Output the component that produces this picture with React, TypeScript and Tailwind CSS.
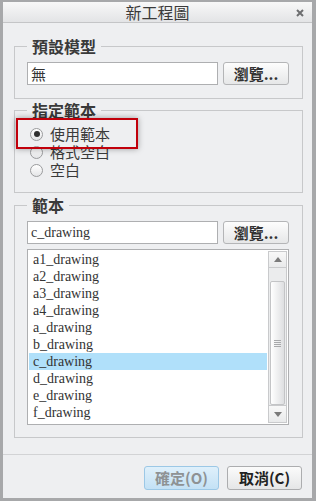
const templates = [
  'a1_drawing',
  'a2_drawing',
  'a3_drawing',
  'a4_drawing',
  'a_drawing',
  'b_drawing',
  'c_drawing',
  'd_drawing',
  'e_drawing',
  'f_drawing',
];

const cjk = "font-['Noto_Sans_CJK_TC','Noto_Sans_CJK_SC',sans-serif]";
const serif = "font-['Liberation_Serif',serif]";

function BrowseButton() {
  return (
    <button className="w-[66px] h-[23px] shrink-0 rounded-[3px] border border-[#b4b5b7] bg-linear-to-b from-[#fdfdfd] to-[#e6e7e8] text-[15px] leading-[20px] font-bold text-[#333]">
      瀏覽...
    </button>
  );
}

function Radio({ checked, label }: { checked?: boolean; label: string }) {
  return (
    <div className="h-[18px] flex items-center">
      <span className="w-[13px] h-[13px] rounded-full border border-[#9a9b9d] bg-linear-to-b from-[#ffffff] to-[#e4e5e7] flex items-center justify-center">
        {checked && <span className="w-[6px] h-[6px] rounded-full bg-[#2f2f2f]" />}
      </span>
      <span className="ml-[7px] text-[15px] leading-[18px] text-[#3a3a3a]">{label}</span>
    </div>
  );
}

function Scrollbar() {
  return (
    <div className="w-[19px] my-[1px] mr-[1px] border border-[#c9cacc] bg-[#ebeced] flex flex-col">
      <div className="h-[16px] border-b border-[#c9cacc] bg-linear-to-b from-[#f8f8f8] to-[#e9eaeb] flex items-center justify-center">
        <svg width="8" height="5" viewBox="0 0 8 5">
          <path d="M0 5 L4 0 L8 5 Z" fill="#7a7a7a" />
        </svg>
      </div>
      <div className="flex-1 flex flex-col">
        <div className="mt-[13px] mx-[1px] h-[124px] rounded-[2px] border border-[#c3c4c6] bg-linear-to-r from-[#ffffff] to-[#dedfe1] flex items-center justify-center">
          <div className="flex flex-col gap-[1px]">
            <span className="w-[7px] h-[1px] bg-[#a8a9ab]" />
            <span className="w-[7px] h-[1px] bg-[#a8a9ab]" />
            <span className="w-[7px] h-[1px] bg-[#a8a9ab]" />
            <span className="w-[7px] h-[1px] bg-[#a8a9ab]" />
          </div>
        </div>
      </div>
      <div className="h-[17px] border-t border-[#c9cacc] bg-linear-to-b from-[#f8f8f8] to-[#e9eaeb] flex items-center justify-center">
        <svg width="8" height="5" viewBox="0 0 8 5">
          <path d="M0 0 L8 0 L4 5 Z" fill="#7a7a7a" />
        </svg>
      </div>
    </div>
  );
}

export default function App() {
  return (
    <div
      className={`w-[316px] h-[501px] border-t-2 border-l-[3px] border-r-4 border-b-[3px] border-[#a7a8aa] bg-[#eeeff1] flex flex-col ${cjk} text-[#333]`}
    >
      {/* Title bar */}
      <div className="h-[21px] shrink-0 relative flex items-center justify-center border-b border-[#c4c5c7] bg-linear-to-b from-[#f8f8f8] to-[#e3e4e6]">
        <span className="text-[16px] leading-[20px] text-[#3a3a3a]">新工程圖</span>
        <svg className="absolute right-[8px] top-[7px]" width="8" height="8" viewBox="0 0 8 8">
          <path d="M1 1 L7 7 M7 1 L1 7" stroke="#6d6e70" strokeWidth="2" />
        </svg>
      </div>

      {/* 預設模型 */}
      <fieldset className="mt-[14px] ml-[11px] mr-[9px] pl-[12px] pr-[13px] pb-[13px] border border-[#c7c8ca]">
        <legend className="px-[5px] text-[16px] leading-[18px] font-bold text-[#3a3a3a]">預設模型</legend>
        <div className="mt-[7px] flex gap-[5px]">
          <div className="flex-1 h-[23px] border border-[#aeafb1] bg-white pl-[3px] text-[15px] leading-[21px] text-[#333]">
            無
          </div>
          <BrowseButton />
        </div>
      </fieldset>

      {/* 指定範本 */}
      <fieldset className="mt-[2px] ml-[11px] mr-[9px] pl-[12px] pr-[13px] pb-[13px] border border-[#c7c8ca]">
        <legend className="px-[5px] text-[16px] leading-[18px] font-bold text-[#3a3a3a]">指定範本</legend>
        <div className="relative mt-[6px] pl-[3px] flex flex-col">
          <Radio checked label="使用範本" />
          <Radio label="格式空白" />
          <Radio label="空白" />
          {/* highlight box */}
          <div className="absolute left-[-11px] top-[-7px] w-[122px] h-[31px] border-2 border-[#c1000b] shadow-[0_0_6px_rgba(0,0,0,0.35)]" />
        </div>
      </fieldset>

      {/* 範本 */}
      <fieldset className="mt-[3px] ml-[11px] mr-[9px] pl-[12px] pr-[13px] pb-[12px] border border-[#c7c8ca]">
        <legend className="px-[5px] text-[16px] leading-[18px] font-bold text-[#3a3a3a]">範本</legend>
        <div className="mt-[7px] flex gap-[5px]">
          <div className={`flex-1 h-[23px] border border-[#aeafb1] bg-white pl-[3px] text-[14px] leading-[21px] text-[#333] ${serif}`}>
            c_drawing
          </div>
          <BrowseButton />
        </div>
        <div className="mt-[5px] h-[176px] border border-[#aeafb1] bg-white flex">
          <ul className={`flex-1 p-[1px] ${serif}`}>
            {templates.map((t) => (
              <li
                key={t}
                className={`h-[17px] pl-[4px] text-[14px] leading-[17px] text-[#333] ${
                  t === 'c_drawing' ? 'bg-[#b0e0fa]' : ''
                }`}
              >
                {t}
              </li>
            ))}
          </ul>
          <Scrollbar />
        </div>
      </fieldset>

      {/* Footer */}
      <div className="mt-[16px] flex-1 border-t border-[#d2d3d5] pt-[11px] pr-[10px] flex justify-end gap-[8px]">
        <button className="w-[75px] h-[24px] rounded-[3px] border border-[#9cc8e6] bg-linear-to-b from-[#dff0fb] to-[#c3e1f5] text-[15px] leading-[20px] font-bold text-[#8e9294]">
          確定(O)
        </button>
        <button className="w-[75px] h-[24px] rounded-[3px] border border-[#acadaf] bg-linear-to-b from-[#fbfbfb] to-[#e5e6e7] text-[15px] leading-[20px] font-bold text-[#222]">
          取消(C)
        </button>
      </div>
    </div>
  );
}
